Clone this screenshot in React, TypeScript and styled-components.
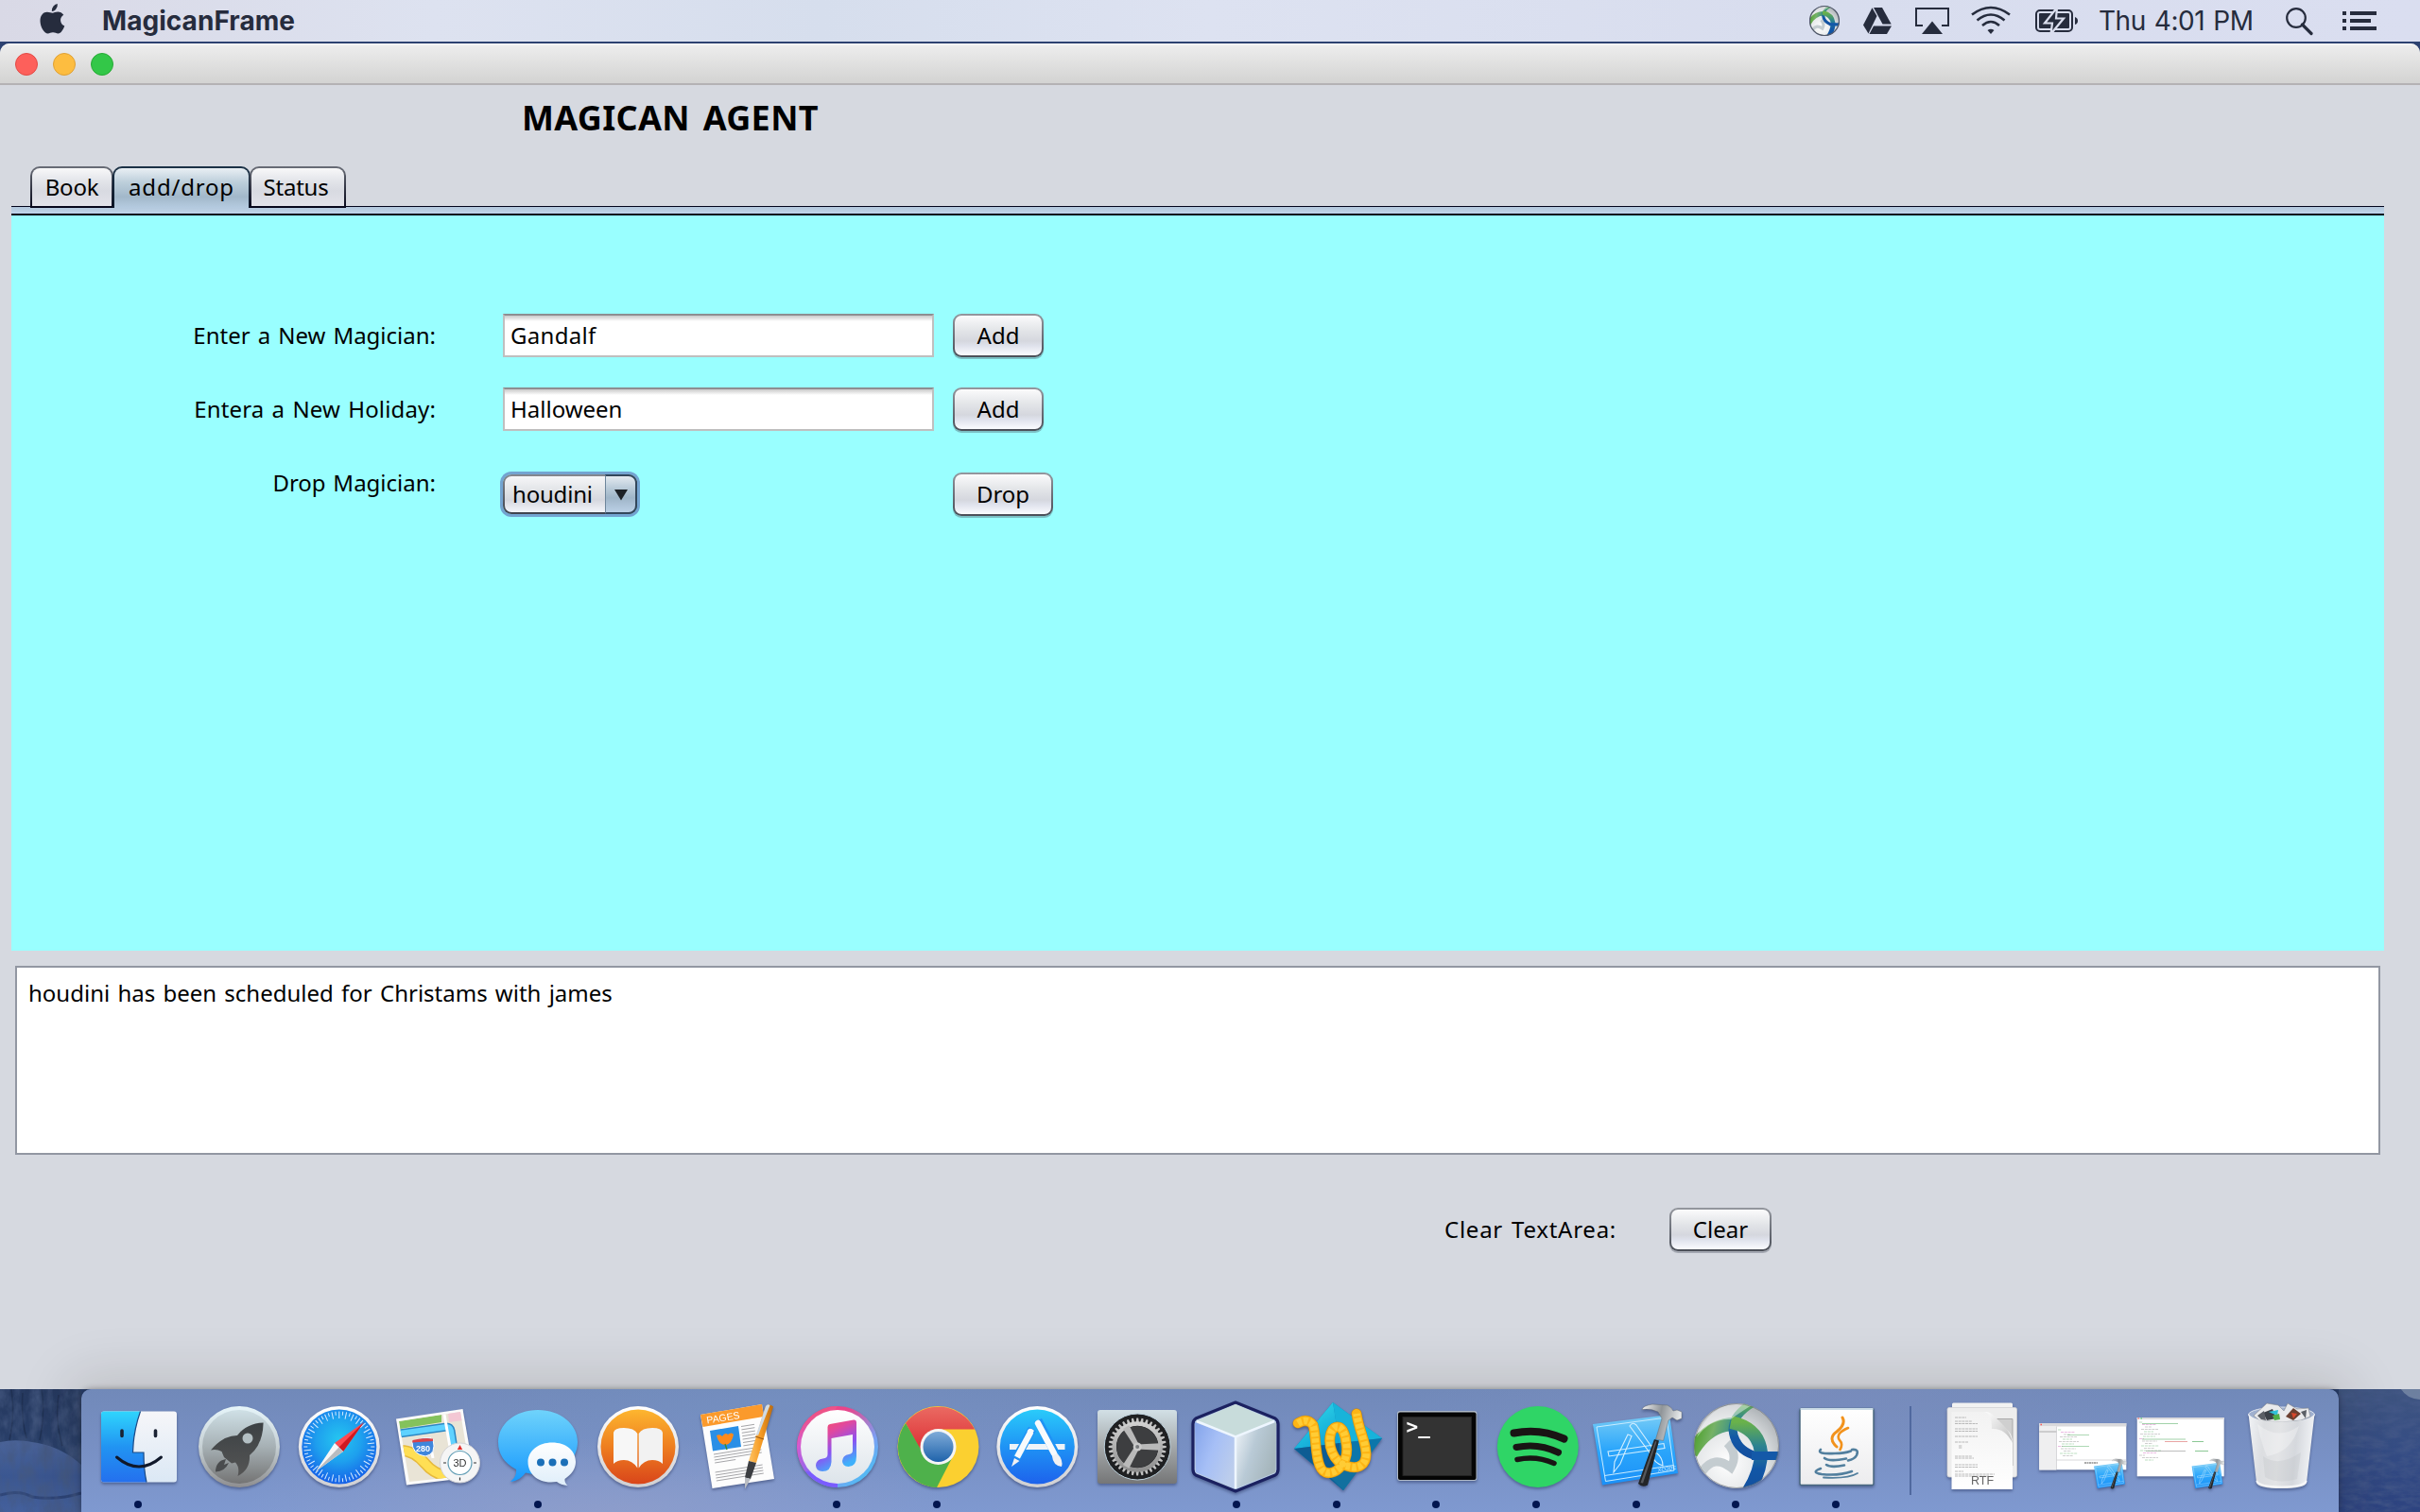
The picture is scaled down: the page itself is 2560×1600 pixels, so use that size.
import React from "react";
import styled, { createGlobalStyle } from "styled-components";

const GlobalStyle = createGlobalStyle`
  *, *::before, *::after { box-sizing: border-box; }
  html, body { margin: 0; padding: 0; background: #34497c; overflow: hidden; }
`;

const swingFont = `"Noto Sans", "Open Sans", sans-serif`;
const ink = "#262c3d";

const Screen = styled.div`
  width: 2560px;
  height: 1600px;
  display: flex;
  flex-direction: column;
  overflow: hidden;
  background: linear-gradient(180deg, #2c4170 0, #33497c 60%, #2a426f 93%, #41588f 100%);
  font-family: ${swingFont};
`;

/* ---------- menu bar ---------- */

const MenuBar = styled.header`
  flex: none;
  height: 44px;
  display: flex;
  align-items: center;
  justify-content: space-between;
  padding: 0 46px 0 42px;
  background: linear-gradient(90deg, #d9d9e6 0, #dde2f0 18%, #d6deed 34%, #dde2f1 50%, #d8ddee 75%, #dadef0 100%);
`;

const MenuLeft = styled.div`
  display: flex;
  align-items: center;
  gap: 39px;
`;

const MenuRight = styled.div`
  display: flex;
  align-items: center;
`;

const AppName = styled.span`
  font: 700 28px/45px Inter, sans-serif;
  letter-spacing: 0.05px;
  color: ${ink};
`;

const Clock = styled.span`
  width: 162px;
  margin: 0 36px 0 22px;
  font: 400 28px/45px Inter, sans-serif;
  letter-spacing: -0.5px;
  word-spacing: 1.8px;
  white-space: nowrap;
  color: ${ink};
`;

const MenuIcon = styled.svg<{ $w: number; $gap?: number }>`
  display: block;
  flex: none;
  width: ${(p) => p.$w}px;
  height: 44px;
  margin-right: ${(p) => p.$gap ?? 0}px;
`;

/* ---------- window ---------- */

const Frame = styled.main`
  flex: none;
  height: 1424px;
  margin-top: 2px;
  display: flex;
  flex-direction: column;
  border-radius: 10px 10px 0 0;
  background: #d6d9e0;
  overflow: hidden;
`;

const TitleBar = styled.div`
  flex: none;
  height: 44px;
  display: flex;
  align-items: center;
  gap: 16px;
  padding: 2px 0 0 16px;
  border-bottom: 2px solid #b4b2b4;
  background: linear-gradient(180deg, #f8f8f8 0, #ececec 3px, #d3d3d2 100%);
`;

const Light = styled.span<{ $fill: string; $edge: string }>`
  width: 24px;
  height: 24px;
  border-radius: 50%;
  border: 1px solid ${(p) => p.$edge};
  background: ${(p) => p.$fill};
`;

const Content = styled.div`
  display: flex;
  flex-direction: column;
  padding: 15px 38px 0 12px;
`;

const Heading = styled.h1`
  margin: 0 0 31px 540px;
  font: 700 36px/40px ${swingFont};
  letter-spacing: 0.35px;
  word-spacing: 4px;
  color: #000;
`;

const TabRow = styled.div`
  display: flex;
  height: 44px;
  padding-left: 20px;
  margin-bottom: -2px;
  position: relative;
`;

const Tab = styled.button<{ $active?: boolean; $w: number; $ls?: number; $dx?: number }>`
  width: ${(p) => p.$w}px;
  height: 44px;
  margin: 0 -1px 0 0;
  padding: 1px ${(p) => p.$dx ?? 0}px ${(p) => (p.$active ? 4 : 2)}px 0;
  border: 2px solid transparent;
  border-bottom-width: ${(p) => (p.$active ? 0 : 2)}px;
  border-radius: 10px 10px 0 0;
  background: ${(p) =>
    p.$active
      ? "linear-gradient(180deg, #e9eff4 0, #bdcfdb 35%, #a2b8ca 72%, #b5cbe0 100%) padding-box, linear-gradient(180deg, #1c3247, #0b1628) border-box"
      : "linear-gradient(180deg, #f8f8f9 0, #e2e4e9 35%, #d8dae1 60%, #e2e3ea 100%) padding-box, linear-gradient(180deg, #6a6e78 0, #2a2d3c 60%, #05061a 100%) border-box"};
  font: 400 24px/36px ${swingFont};
  letter-spacing: ${(p) => p.$ls ?? 0}px;
  color: #000;
  white-space: nowrap;
`;

const TabStrip = styled.div`
  height: 10px;
  border-top: 1px solid #02041c;
  border-bottom: 2px solid #02041c;
  background: linear-gradient(180deg, #b3c7dc, #c0d6ea);
`;

const Panel = styled.section`
  height: 778px;
  padding-top: 104px;
  background: #99ffff;
`;

const FormGrid = styled.div`
  display: grid;
  grid-template-columns: 449px 456px 110px;
  grid-auto-rows: 46px;
  column-gap: 71px;
  row-gap: 32px;
`;

const Label = styled.label<{ $ls?: number; $ws?: number }>`
  font: 400 24px/46px ${swingFont};
  letter-spacing: ${(p) => p.$ls ?? 0}px;
  word-spacing: ${(p) => p.$ws ?? 0}px;
  text-align: right;
  white-space: nowrap;
  color: #000;
`;

const TextField = styled.div`
  height: 46px;
  padding-left: 6px;
  border: 2px solid #bfbfbf;
  border-top-color: #8d8e91;
  background: linear-gradient(180deg, #c9c9c9 0, #fff 6px);
  font: 400 24px/42px ${swingFont};
  color: #000;
`;

const Fitted = styled.span<{ $ls?: number; $ws?: number }>`
  letter-spacing: ${(p) => p.$ls ?? 0}px;
  word-spacing: ${(p) => p.$ws ?? 0}px;
`;

const PushButton = styled.button<{ $w: number; $low?: boolean }>`
  width: ${(p) => p.$w}px;
  height: 46px;
  padding: 0;
  margin: ${(p) => (p.$low ? 12 : 0)}px 0 0;
  border: 2px solid transparent;
  border-radius: 9px;
  background:
    linear-gradient(180deg, #fbfbfc 0, #e4e6e9 35%, #d5d7de 64%, #dfe2ec 76%, #fbfcff 100%) padding-box,
    linear-gradient(180deg, #94979e 0, #6c7079 50%, #4b4f58 100%) border-box;
  box-shadow: 0 2px 0 rgba(70, 75, 90, 0.35);
  font: 400 24px/42px ${swingFont};
  color: #000;
`;

const ButtonCell = styled.div`
  margin-left: -51px;
  display: flex;
  align-items: flex-start;
`;

const Combo = styled.div`
  width: 142px;
  height: 42px;
  margin: 14px 0 0;
  display: flex;
  border: 2px solid transparent;
  border-radius: 9px;
  box-shadow: 0 0 0 3px #73a4d1;
  background:
    linear-gradient(180deg, #f6f6f8 0, #e4e6e9 35%, #d5d7de 66%, #f3f5fb 100%) padding-box,
    linear-gradient(180deg, #85888f 0, #3e434d 100%) border-box;
  font: 400 24px/38px ${swingFont};
  color: #000;
`;

const ComboValue = styled.span`
  width: 106px;
  padding-left: 8px;
  letter-spacing: -0.2px;
`;

const ComboArrow = styled.span`
  flex: 1;
  display: flex;
  align-items: center;
  justify-content: center;
  margin: -2px -2px -2px 0;
  border: 2px solid #33475b;
  border-left: 1px solid #6d859b;
  border-radius: 0 9px 9px 0;
  background: linear-gradient(180deg, #e3eaf0 0, #b7c9d7 35%, #9fb5c8 60%, #bbd0e6 100%);

  svg { display: block; margin-top: 1px; }
`;

const Output = styled.div`
  height: 200px;
  margin: 16px 4px 0;
  padding: 11px 12px;
  border: 2px solid #9297a2;
  background: #fff;
  font: 400 24px/32px ${swingFont};
  color: #000;
`;

const ClearRow = styled.div`
  display: flex;
  margin-top: 56px;
  padding-left: 1516px;
`;

const ClearLabel = styled.span`
  width: 238px;
  font: 400 24px/46px ${swingFont};
  color: #000;
`;

/* ---------- dock ---------- */

const DockArea = styled.footer`
  flex: none;
  display: flex;
  position: relative;
  height: 130px;
  background: #2b4170;
`;

const Wallpaper = styled.svg`
  display: block;
  flex: none;
  width: 86px;
  height: 130px;
`;

const Dock = styled.nav`
  flex: 1;
  position: relative;
  display: flex;
  height: 130px;
  padding-left: 8.2px;
  border-radius: 10px 10px 0 0;
  box-shadow: 0 0 56px 14px rgba(30, 25, 10, 0.13), 0 0 6px rgba(0, 0, 0, 0.35);
  background:
    radial-gradient(420px 90px at 31% 10%, rgba(120, 150, 200, 0.35), transparent),
    radial-gradient(380px 80px at 23% 100%, rgba(150, 160, 200, 0.6), transparent),
    radial-gradient(400px 90px at 76% 0, rgba(125, 142, 190, 0.6), transparent),
    linear-gradient(180deg, #7189b9 0, #7890c4 50%, #7f99d0 100%);
`;

const Slot = styled.div`
  flex: none;
  width: 105.65px;
  display: flex;
  flex-direction: column;
  align-items: center;
  padding-top: 11px;
`;

const DockIcon = styled.svg`
  display: block;
  width: 100px;
  height: 100px;
  overflow: visible;
  filter: drop-shadow(0 2px 1.5px rgba(20, 30, 70, 0.4));
`;

const Dot = styled.span`
  width: 8px;
  height: 8px;
  margin: 7px 2px 0 0;
  border-radius: 50%;
  background: #021650;
`;

const Divider = styled.span`
  flex: none;
  width: 2px;
  height: 94px;
  margin: 18px 22.4px 0 24px;
  background: #50699f;
`;

/* ---------- icon drawings (100 x 100 canvas) ---------- */

const Grad = ({ id, stops, x2 = 0, y2 = 1 }: { id: string; stops: string[]; x2?: number; y2?: number }) => (
  <linearGradient id={id} x1="0" y1="0" x2={x2} y2={y2}>
    {stops.map((c, i) => (
      <stop key={i} offset={i / (stops.length - 1)} stopColor={c} />
    ))}
  </linearGradient>
);

const Finder = () => (
  <>
    <defs>
      <Grad id="fnL" stops={["#2fd5fd", "#2194f2", "#2470ee"]} />
      <Grad id="fnR" stops={["#f6f6f9", "#dbe8f5"]} />
    </defs>
    <rect x="10" y="12.500" width="80" height="75" rx="3" fill="url(#fnR)" />
    <path d="M13 12.500H51.500Q44 34 43.500 56H55Q55 74 58 87.500H13Q10 87.500 10 84.500V15.500Q10 12.500 13 12.500Z" fill="url(#fnL)" />
    <path d="M51.500 12.500Q44 34 43.500 56H55Q55 74 58 87.500" fill="none" stroke="#1b4a86" strokeWidth="1.200" />
    <path d="M32 33v5.500M67.500 33v5.500" stroke="#1a2233" strokeWidth="3.600" strokeLinecap="round" />
    <path d="M26.500 61Q50 81 73.500 61" fill="none" stroke="#10182a" strokeWidth="3" strokeLinecap="round" />
  </>
);

const Launchpad = () => (
  <>
    <defs>
      <Grad id="lpO" stops={["#e6f5fa", "#c6d0d4", "#8e8e90"]} />
      <Grad id="lpI" stops={["#cfe0e6", "#a6b0b4", "#747474"]} />
      <Grad id="lpR" stops={["#3c4144", "#555"]} />
    </defs>
    <circle cx="50" cy="50" r="43" fill="url(#lpO)" />
    <circle cx="50" cy="50" r="39" fill="url(#lpI)" />
    <path d="M75.600 24.500Q58 25 48 38Q33 38 20 53.500Q26 52 31.500 55L34 61L42 67.500L46 66.500Q51 72 48.500 81Q62 74 61 59Q75 48 75.600 24.500Z" fill="url(#lpR)" />
    <path d="M36 63Q25 65 25 76.500Q35 76 39 67L34 69Z" fill="#4a4c4e" />
    <circle cx="59" cy="41" r="5.500" fill="#b3bfc3" />
  </>
);

const Safari = () => (
  <>
    <defs>
      <radialGradient id="sfB" cx=".5" cy=".4" r=".6">
        <stop offset="0" stopColor="#25c6f0" />
        <stop offset=".5" stopColor="#1ea0ee" />
        <stop offset="1" stopColor="#1560e8" />
      </radialGradient>
      <Grad id="sfO" stops={["#ffffff", "#cfcfd2"]} />
    </defs>
    <circle cx="50.800" cy="50" r="43" fill="url(#sfO)" />
    <circle cx="50.800" cy="50" r="39.500" fill="url(#sfB)" />
    {Array.from({ length: 60 }, (_, i) => (
      <path key={i} d={`M50.800 12.500V${i % 2 ? 16.5 : 20}`} stroke="#d8ecff" strokeWidth="1" transform={`rotate(${i * 6} 50.8 50)`} />
    ))}
    <path d="M77 24L46 46L55 55Z" fill="#ff4a50" />
    <path d="M77 24L50.500 50.500L55 55Z" fill="#d01920" />
    <path d="M26 76L46 46L55 55Z" fill="#f7f7f7" />
    <path d="M26 76L50.500 50.500L55 55Z" fill="#b9bcc0" />
  </>
);

const MapsIcon = () => (
  <>
    <clipPath id="mpC">
      <path d="M8 23L73 13L84 80L19 87Z" />
    </clipPath>
    <path d="M5 20.500L75.500 10L88 82L16 90.500Z" fill="#fbfbfa" />
    <g clipPath="url(#mpC)">
      <path d="M0 0H100V100H0Z" fill="#e9e4d6" />
      <path d="M8 23L53 16V24L9 31Z" fill="#84c25c" />
      <path d="M60 14L74 12L76 22L61 24Z" fill="#f3c7d4" />
      <path d="M8 36L58 29Q62 29 63 33L66 52" fill="none" stroke="#2d88c4" strokeWidth="9" />
      <path d="M8 36L58 29Q62 29 63 33L66 52" fill="none" stroke="#5fd2ff" strokeWidth="6" />
      <path d="M10 54Q24 54 36 68Q44 78 60 82" fill="none" stroke="#e6b93c" strokeWidth="12" />
      <path d="M10 54Q24 54 36 68Q44 78 60 82" fill="none" stroke="#ffdf54" strokeWidth="9" />
      <path d="M55 10L62 50M40 40L44 62" stroke="#fff" strokeWidth="3" />
    </g>
    <path d="M22 45Q34 38 44 42Q48 58 36 60Q22 58 22 45Z" fill="#3f86dc" stroke="#fff" strokeWidth="1" />
    <path d="M22 45.500L22.500 43Q34 40 44 41.500V44Z" fill="#d9434a" />
    <text x="33.500" y="54.500" fontSize="9" fontFamily="Liberation Sans, Arial, sans-serif" fontWeight="700" fill="#fff" textAnchor="middle">280</text>
    <circle cx="72.500" cy="67" r="21" fill="#f5f5f5" stroke="#d3d3d6" />
    <circle cx="72.500" cy="67" r="12.500" fill="#fff" stroke="#5f9cb4" strokeWidth="1.200" />
    <path d="M72.500 48L75.200 53H69.800Z" fill="#e22a2a" />
    <path d="M72.500 82.500v3M55 67h3M87 67h3" stroke="#333" strokeWidth="1.200" />
    <text x="72.500" y="71" fontSize="11" fontFamily="Liberation Sans, Arial, sans-serif" fill="#333" textAnchor="middle">3D</text>
  </>
);

const Messages = () => (
  <>
    <defs>
      <Grad id="msB" stops={["#6fd3fb", "#1899fd"]} />
      <Grad id="msW" stops={["#ffffff", "#dfeefa"]} />
    </defs>
    <path d="M49 11C73 11 91 26 91 45C91 65 73 79 49 79Q42 79 36 77.500Q30 86 20 87Q27 81 26 74Q7 64 7 45C7 26 25 11 49 11Z" fill="url(#msB)" />
    <path d="M64 45.500C79 45.500 89 54 89 66C89 73 85 79 77.500 84Q77 88 80.500 91Q73 90.500 69 87C50 90 38.500 79 38.500 66C38.500 54 50 45.500 64 45.500Z" fill="url(#msW)" />
    <circle cx="52" cy="66.500" r="4" fill="#1a6fb8" />
    <circle cx="64.500" cy="66.500" r="4" fill="#1a6fb8" />
    <circle cx="77" cy="66.500" r="4" fill="#1a6fb8" />
  </>
);

const Books = () => (
  <>
    <defs>
      <Grad id="ibB" stops={["#fdb62f", "#ee7e20", "#d9451a"]} />
      <Grad id="ibO" stops={["#fff", "#cfcfd2"]} />
    </defs>
    <circle cx="50" cy="50" r="43" fill="url(#ibO)" />
    <circle cx="50" cy="50" r="39.500" fill="url(#ibB)" />
    <path d="M24 35Q25 30 35 30Q46 30 49.300 36V72.500Q44 64 35 64Q28 64 24 68Z" fill="#f7f7f7" />
    <path d="M76 35Q75 30 65 30Q54 30 50.700 36V72.500Q56 64 65 64Q72 64 76 68Z" fill="#f2f2f2" />
  </>
);

const Pages = () => (
  <>
    <defs>
      <Grad id="pgP" x2={1} y2={0} stops={["#ffc466", "#f59a23", "#b96a10"]} />
    </defs>
    <path d="M10 16L75 5L88 84L22.500 94Z" fill="#fdfdfd" />
    <path d="M10 16L75 5L77 18L12.500 29Z" fill="#fb9a2c" />
    <text x="17" y="25.500" fontSize="10.500" fontFamily="Liberation Sans, Arial, sans-serif" fill="#fff" transform="rotate(-9 17 25.500)">PAGES</text>
    <path d="M20 33L50 28L53 50L23 54.500Z" fill="#2a8fe6" />
    <path d="M27 38Q31 36 33 39Q36 34 39 37Q43 34 45 37Q43 47 37 48Q29 48 27 38Z" fill="#ff8a1c" />
    <path d="M36 47L38 53" stroke="#3f8a3a" strokeWidth="1.500" />
    {Array.from({ length: 7 }, (_, i) => (
      <path key={i} d={`M${53 + i * 0.4} ${28.500 + i * 3.400}l14 -2.200`} stroke="#a5a5a8" strokeWidth="1" />
    ))}
    {[58, 61, 64, 67, 77, 80, 83, 86].map((y, i) => (
      <path key={y} d={`M${24 + i * 0.4} ${y}l${i === 3 ? 22 : 50} ${i === 3 ? -3.500 : -8}`} stroke="#a5a5a8" strokeWidth="1" />
    ))}
    <path d="M78.500 8Q82 3.500 87 7.500L69 67L61 65Z" fill="url(#pgP)" />
    <path d="M79 7Q81 4 83.500 6L71 38L69 37Z" fill="#cfdbe6" />
    <path d="M68 39L77 42" stroke="#9a5a10" strokeWidth="1.200" />
    <path d="M61 65L69 67L63 84L57 82.500Z" fill="#3b3d41" />
    <path d="M57 82.500L63 84L57 94.500Z" fill="#b9bcc2" />
  </>
);

const ITunes = () => (
  <>
    <defs>
      <Grad id="itR" x2={1} stops={["#ff3d78", "#e9468c", "#7d9ef2", "#2fd0f5"]} />
      <Grad id="itV" x2={0.2} stops={["#fb4e5c", "#d65bd0", "#7a6cfb"]} />
      <Grad id="itN" x2={0.4} stops={["#ff5157", "#e0499f", "#8b52f2", "#3fb0fb"]} />
      <Grad id="itF" stops={["#ffffff", "#dde4ea"]} />
    </defs>
    <circle cx="50" cy="50" r="43" fill="url(#itR)" />
    <path d="M50 7A43 43 0 0 0 30 88Q12 60 50 7Z" fill="url(#itV)" />
    <path d="M16 76A43 43 0 0 0 50 93L50 80Z" fill="#7a5cff" />
    <circle cx="50" cy="50" r="39" fill="url(#itF)" />
    <path d="M39.500 29Q39.500 26.500 42 26L67 21.500Q70 21 70 24V60Q70 71 61.500 71Q55 70.500 55 65Q55.500 59 62 58Q66 57.500 66 54V37L43.500 41V66Q43 76 34 76Q27 75.500 27 69.500Q27.500 63.500 34.500 62.500Q39.500 62 39.500 58Z" fill="url(#itN)" />
  </>
);

const Chrome = () => (
  <>
    <defs>
      <Grad id="crB" stops={["#7fabd8", "#1f63ab"]} />
      <Grad id="crR" stops={["#ea6a62", "#dc2a30"]} />
    </defs>
    <circle cx="50.500" cy="50" r="43" fill="#fbd030" />
    <path d="M16 25A43 43 0 0 1 89 31.500H50Q36 33 34 58Z" fill="url(#crR)" />
    <path d="M16 25A43 43 0 0 0 49 93L65 62Q50 76 35 58Z" fill="#4eb14b" />
    <circle cx="50.500" cy="50" r="19" fill="#f5f5f5" />
    <circle cx="50.500" cy="50" r="16" fill="url(#crB)" />
  </>
);

const AppStore = () => (
  <>
    <defs>
      <Grad id="asB" stops={["#2acbfa", "#1f93f5", "#1d62ec"]} />
      <Grad id="asO" stops={["#fff", "#cfcfd2"]} />
    </defs>
    <circle cx="49.300" cy="50" r="43" fill="url(#asO)" />
    <circle cx="49.300" cy="50" r="39.500" fill="url(#asB)" />
    <path d="M20 47H78.500V53H20Z" fill="#eef3f8" />
    <path d="M50 22L70 60" stroke="#1f93f5" strokeWidth="9" />
    <path d="M44 31L27 62" stroke="#1f93f5" strokeWidth="9" />
    <path d="M50 25L67 57" stroke="#f8fafc" strokeWidth="6.500" strokeLinecap="round" />
    <path d="M65 60L70.500 57Q77 64 75 71Q66 70 65 60Z" fill="#f1f1f3" />
    <path d="M42.500 34L28 61" stroke="#f8fafc" strokeWidth="6.500" strokeLinecap="butt" />
    <path d="M39.500 32Q42 29 46 33L44 36L38.500 34Z" fill="#f8fafc" />
    <path d="M25 62L30.500 65L22 71Z" fill="#f1f1f3" />
  </>
);

const Settings = () => (
  <>
    <defs>
      <Grad id="spB" stops={["#d2e0e6", "#a4a8aa", "#757677"]} />
      <Grad id="spG" stops={["#d0d0d0", "#8f8f8f"]} />
    </defs>
    <rect x="8" y="11" width="84" height="78" rx="3" fill="url(#spB)" />
    <circle cx="50.200" cy="50" r="35" fill="#1f2022" stroke="#bcd0dc" strokeWidth="1" />
    {Array.from({ length: 36 }, (_, i) => (
      <path key={i} d="M48.600 24L49.300 19.500H51.200L51.900 24Z" fill="#c2c2c2" transform={`rotate(${i * 10} 50.200 50)`} />
    ))}
    <circle cx="50.200" cy="50" r="24.500" fill="none" stroke="url(#spG)" strokeWidth="4.500" />
    <circle cx="50.200" cy="50" r="22" fill="#3d3e40" />
    {[90, 210, 330].map((a) => (
      <path key={a} d="M47.800 50L46.500 26H54L52.700 50Z" fill="#b9b9b9" transform={`rotate(${a} 50.200 50)`} />
    ))}
    <circle cx="50.200" cy="50" r="4.500" fill="#c9c9c9" />
    <circle cx="50.200" cy="50" r="2" fill="#77797c" />
  </>
);

const NetBeans = () => (
  <>
    <defs>
      <Grad id="nbL" x2={1} y2={0.6} stops={["#83a3ea", "#a6bff6", "#bccdec"]} />
      <Grad id="nbR" x2={1} y2={0.5} stops={["#f3f7fb", "#b9cad6", "#a5b5bb"]} />
    </defs>
    <path d="M48 3L90 20Q93 22 93 26V74Q93 78 90 80L48 97L6 80Q3 78 3 74V26Q3 22 6 20Z" fill="#b7cbe4" stroke="#1b2160" strokeWidth="3.200" strokeLinejoin="round" />
    <path d="M48 5L89 22.500L48 39L7 22.500Z" fill="#c8dcdb" />
    <path d="M5 24L48 40V94L6 77Z" fill="url(#nbL)" />
    <path d="M91 24L48 40V94L90.500 77Z" fill="url(#nbR)" />
    <path d="M7 23L48 39.500L89 23M48 40V94" fill="none" stroke="#eef6ff" strokeWidth="2.500" />
  </>
);

const ropePath = "M8 25Q18 19 24 27C28 38 25 72 37 77C48 81 63 66 59 46C57 25 46 26 43 35C39 48 45 66 59 70C73 75 81 68 80 56C79 42 73 34 70 15";

const Workbench = () => (
  <>
    <defs>
      <Grad id="wbA" x2={0.6} stops={["#35e0ec", "#10a5d6"]} />
    </defs>
    <path d="M45 3L97 41L56 96L4 52Z" fill="#1489bd" />
    <path d="M45 3L4 52L52 46Z" fill="url(#wbA)" />
    <path d="M45 3L97 41L52 46Z" fill="#17b3da" />
    <path d="M97 41L56 96L52 46Z" fill="#0c76aa" />
    <path d="M4 52L56 96L52 46Z" fill="#0d5c93" />
    <path d="M40 80L56 74L70 77L56 96Z" fill="#12709f" />
    <path d={ropePath} fill="none" stroke="#c98712" strokeWidth="11" strokeLinecap="round" />
    <path d={ropePath} fill="none" stroke="#fdb515" strokeWidth="10" strokeLinecap="round" />
    <path d={ropePath} fill="none" stroke="#ffcc35" strokeWidth="7.500" strokeDasharray="4.500 2" />
  </>
);

const Terminal = () => (
  <>
    <rect x="8" y="12" width="84.500" height="74" rx="3" fill="#aeb9c6" />
    <rect x="9" y="13.500" width="82.500" height="71.500" rx="2" fill="#050505" />
    <rect x="14" y="18.500" width="72.500" height="62" fill="#333" stroke="#222" />
    <text x="17.500" y="36" fontSize="21" fontFamily="DejaVu Sans Mono, monospace" fontWeight="700" fill="#fff">&gt;_</text>
  </>
);

const Spotify = () => (
  <>
    <circle cx="50.800" cy="50" r="43" fill="#2fd566" />
    <g fill="none" stroke="#191414" strokeLinecap="round">
      <path d="M25.500 35.500Q53 30 78.500 41.500" strokeWidth="8" />
      <path d="M28 50.500Q51 45.500 72.500 56" strokeWidth="7" />
      <path d="M29 63.500Q49 59 68 67.500" strokeWidth="5.500" />
    </g>
  </>
);

const XcodeArt = ({ id }: { id: string }) => (
  <>
    <defs>
      <Grad id={`${id}b`} stops={["#79cdf6", "#2ba6fb", "#1a90f8"]} />
      <Grad id={`${id}h`} x2={1} y2={0.2} stops={["#f4f4f4", "#8f9498", "#e9ebec"]} />
    </defs>
    <path d="M3 26L84 16L93 78L13 90.500Z" fill={`url(#${id}b)`} />
    <path d="M7 29L81 19L89 75L16.500 86.500Z" fill="none" stroke="#c9ecff" strokeWidth="1" />
    <path d="M15.500 80.500L88.500 69.500" stroke="#c9ecff" strokeWidth="1" />
    <g fill="none" stroke="#d3efff" strokeWidth="1.100">
      <path d="M19 55L78 46.500L79 51.500L20 60Z" />
      <path d="M40 37L44 38.500L32 68L25 77L26 66Z" />
      <path d="M42 28Q45 23 49 27L70 57L66 60Z" />
      <path d="M66 60Q68 67 77 70Q77 62 71 57" />
    </g>
    <path d="M69.500 42L76 20L72 13Q64 9 55 10.500Q56 6.500 66 5L82 6Q86 8 88 12L92 11L97 13V20L92 22L87 19L83 22L77.500 43.500Z" fill={`url(#${id}h)`} stroke="#666c72" strokeWidth=".5" />
    <path d="M68 42L73 43.500L61 90.500Q55 93.500 51 89Z" fill="#232527" />
    <path d="M69 44L70.500 44.500L56 88.500L53.500 88Z" fill="#55585c" />
  </>
);

const Xcode = () => (
  <>
    <XcodeArt id="xc" />
    <text x="72" y="76.500" fontSize="5.500" fontFamily="Liberation Sans, Arial, sans-serif" fill="#d3efff" transform="rotate(-8 72 76.500)">XCODE</text>
  </>
);

const GlobeArt = ({ id }: { id: string }) => (
  <>
    <defs>
      <radialGradient id={`${id}s`} cx=".4" cy=".7" r=".75">
        <stop offset="0" stopColor="#ffffff" />
        <stop offset=".6" stopColor="#dfe2e4" />
        <stop offset="1" stopColor="#a9aeb2" />
      </radialGradient>
      <Grad id={`${id}g`} x2={1} y2={0.2} stops={["#3f9a16", "#76b266", "#2f8b8f"]} />
      <Grad id={`${id}b`} stops={["#6ab24a", "#2c8390", "#1257a6", "#124f9f"]} />
      <clipPath id={`${id}c`}>
        <circle cx="50" cy="49" r="45" />
      </clipPath>
    </defs>
    <circle cx="50" cy="49" r="45" fill={`url(#${id}s)`} />
    <g clipPath={`url(#${id}c)`} fill="none">
      <path d="M14 76Q26 58 44 72Q52 58 40 46" stroke="#c4ccd0" strokeWidth="9" />
      <path d="M2 57Q20 25 50 26" stroke={`url(#${id}g)`} strokeWidth="14" />
      <path d="M68 3Q46 16 46 32Q48 52 68 59" stroke={`url(#${id}b)`} strokeWidth="9" />
      <path d="M44 24Q73 30 76 56Q76 76 62 98" stroke={`url(#${id}b)`} strokeWidth="14" />
      <path d="M66 59.500H98" stroke="#1459a8" strokeWidth="9" />
      <path d="M8 40Q20 6 52 4L66 6Q50 16 44 21Q22 20 8 40Z" fill="#fff" opacity=".45" />
    </g>
    <circle cx="50" cy="49" r="44.500" fill="none" stroke="#6c7276" strokeOpacity=".6" />
  </>
);

const Java = () => (
  <>
    <defs>
      <Grad id="jvP" stops={["#ffffff", "#ececee"]} />
    </defs>
    <rect x="11" y="9.500" width="78" height="81" rx="1.500" fill="url(#jvP)" stroke="#49687f" strokeWidth="1.500" />
    <path d="M11.500 10H88.500" stroke="#c9dbe6" strokeWidth="2" />
    <g fill="none" stroke="#f2921c" strokeLinecap="round">
      <path d="M56 19Q60 26 50 34Q40 41 50 50" strokeWidth="3" />
      <path d="M62 30Q48 36 53 43Q57 47 53.500 53" strokeWidth="2.600" />
    </g>
    <g fill="none" stroke="#527f9e" strokeLinecap="round" strokeWidth="2.600">
      <path d="M33 53Q28 58 48 57Q58 57 65 54.500" />
      <path d="M66 53Q74 52 71 59Q69 63 62 64.500" />
      <path d="M37 62Q42 66 60 62.500" />
      <path d="M39 69Q44 72.500 58 69.500" />
      <path d="M33 73Q22 77 34 79Q52 81 66 76" />
      <path d="M36 82.500Q62 84 72 78" strokeWidth="1.800" />
    </g>
  </>
);

const RtfStack = () => (
  <>
    <defs>
      <Grad id="rtF" stops={["#f2f2f2", "#ffffff"]} />
      <Grad id="rtC" x2={1} stops={["#ffffff", "#bdbdbd"]} />
    </defs>
    <rect x="18" y="3.500" width="64" height="14" rx="1.500" fill="#f2f2f2" />
    <rect x="13" y="8.500" width="73.500" height="73.500" rx="2" fill="#ededed" stroke="#d2d2d4" strokeWidth=".8" />
    <path d="M60 20.500H82V70H60Z" fill="#cfcfcf" stroke="#aaa" />
    <path d="M17.500 13H54Q58 13 62 17L78 34Q82 38 82 46V95H17.500Z" fill="url(#rtF)" />
    <path d="M52 13Q60 14 60 31Q74 30 82 46Q80 36 74 29L62 17Q58 13 52 13Z" fill="url(#rtC)" />
    {[19, 23, 25.500, 31, 33.500, 39, 45, 49, 51, 60, 62, 69, 71.500, 76, 79, 81].map((y, i) => (
      <path key={y} d={`M${i === 7 || i === 8 ? 25 : 21} ${y}h${[12, 18, 24, 24, 24, 24, 14, 4, 4, 18, 20, 24, 24, 9, 42, 36][i]}`} stroke="#a8a8a8" strokeWidth=".8" strokeDasharray="3 .7" />
    ))}
    <text x="50" y="90" fontSize="12.500" fontFamily="Liberation Sans, Arial, sans-serif" fill="#666" textAnchor="middle">RTF</text>
  </>
);

const codeTone = ["#3da34d", "#c63fb0", "#777", "#777", "#3da34d", "#777"];

const CodeLines = ({ x, y, n }: { x: number; y: number; n: number }) => (
  <>
    {Array.from({ length: n }, (_, i) => (
      <path key={i} d={`M${x + ((i * 3) % 7)} ${y + i * 2.500}h${4 + ((i * 11) % 19)}`} stroke={codeTone[i % 6]} strokeWidth=".6" strokeDasharray="3 .8" opacity=".6" />
    ))}
  </>
);

const WindowA = () => (
  <>
    <rect x="4.300" y="25" width="92" height="49.300" fill="#fff" />
    <path d="M4.300 25h92v3.500h-92Z" fill="#d9d9dc" />
    <path d="M4.300 28.500h18v46h-18Z" fill="#efeff0" />
    <path d="M22.500 28.500V74M22.500 64H96" stroke="#c9c9cc" strokeWidth=".7" />
    <path d="M4.300 34h18" stroke="#999" strokeWidth=".8" />
    <path d="M5.500 26.500h1.500" stroke="#f55" strokeWidth="1.400" />
    <path d="M52 67H66" stroke="#555" strokeWidth="1.200" strokeDasharray="2 .5" />
    <CodeLines x={24} y={32} n={12} />
    <path d="M34 37.500h23M28 49.500h29" stroke="#3da34d" strokeWidth=".6" opacity=".7" />
    <g transform="translate(61 61) scale(.365)"><XcodeArt id="xa" /></g>
  </>
);

const WindowB = () => (
  <>
    <rect x="2.700" y="19" width="92" height="62.300" fill="#fff" />
    <path d="M2.700 19h92v2h-92Z" fill="#dcdcde" />
    <path d="M3.500 20h1.500" stroke="#f55" strokeWidth="1.200" />
    <path d="M6.500 20h1.500" stroke="#3c5" strokeWidth="1.200" />
    <CodeLines x={5} y={24} n={17} />
    <path d="M8 25.500h38M8 42h46" stroke="#3da34d" strokeWidth=".6" opacity=".8" />
    <path d="M32 44.500h24" stroke="#d2433f" strokeWidth=".6" opacity=".8" />
    <path d="M61 44.500h12M64 54.500h14" stroke="#3da34d" strokeWidth=".6" />
    <path d="M12 54.500h42" stroke="#777" strokeWidth=".6" opacity=".8" />
    <g transform="translate(59.500 61) scale(.365)"><XcodeArt id="xb" /></g>
  </>
);

const Trash = () => (
  <>
    <defs>
      <Grad id="trB" x2={1} y2={0.1} stops={["#f1f3f6", "#dcdee1", "#e3e4e6", "#d5d8dd", "#f0f2f5"]} />
    </defs>
    <ellipse cx="49.500" cy="16" rx="35" ry="8" fill="#9fb0cf" stroke="#dfe5f0" />
    <path d="M20 17L34 4L46 6L52 12L56 4L66 10L78 9L80 18L70 22L50 24L26 22Z" fill="#e9eaec" stroke="#85888e" strokeWidth=".6" />
    <path d="M30 14L40 10L44 20L34 22Z" fill="#3c4148" />
    <path d="M36 13L46 11L45 17Z" fill="#2fc0d8" />
    <path d="M40 17L47 15L48 21L42 22Z" fill="#4fae4a" />
    <path d="M54 18L62 9L70 15L62 22Z" fill="#6c4030" />
    <path d="M60 14L66 15L62 20Z" fill="#d9482c" />
    <path d="M24 17L31 12L33 22L28 21ZM70 13L76 11L75 20Z" fill="#5b5f66" />
    <path d="M14.500 15Q20 23.500 49.500 23.500Q79 23.500 84.500 15L76 88Q74 94 49.500 94Q25 94 23 88Z" fill="url(#trB)" />
    <path d="M24 26Q46 44 68 28Q60 56 34 60Q28 46 24 26Z" fill="#fff" opacity=".3" />
    <path d="M30 60Q46 72 70 56L66 84Q46 90 32 82Z" fill="#b9bcc0" opacity=".25" />
    <path d="M23 86Q26 92.500 49.500 92.500Q73 92.500 76 86" fill="none" stroke="#fff" strokeWidth="2" opacity=".7" />
  </>
);

/* Snowy hillside left of the dock, rough water right of it. */

const Hillside = () => (
  <Wallpaper viewBox="0 0 86 130">
    <defs>
      <Grad id="hlS" stops={["#26395f", "#2c4675"]} />
      <Grad id="hlG" stops={["#4a6398", "#3b5791", "#44609c"]} />
      <filter id="hlN" x="0" y="0" width="100%" height="100%">
        <feTurbulence type="fractalNoise" baseFrequency=".09 .05" numOctaves="4" seed="4" />
        <feColorMatrix values="0 0 0 0 .06  0 0 0 0 .1  0 0 0 0 .22  1.6 0 0 0 -.55" />
      </filter>
    </defs>
    <rect width="86" height="130" fill="url(#hlS)" />
    <path d="M0 56Q18 52 40 57Q66 62 86 80V130H0Z" fill="url(#hlG)" />
    <path d="M12 0Q16 26 10 54M24 4Q22 30 28 52M44 0Q48 24 42 54M62 6Q58 34 66 60" fill="none" stroke="#1c2c4c" strokeWidth="1.500" opacity=".7" />
    <path d="M0 112Q20 106 34 114Q60 118 86 110" fill="none" stroke="#24396a" strokeWidth="3" opacity=".7" />
    <rect width="86" height="130" filter="url(#hlN)" />
  </Wallpaper>
);

const Water = () => (
  <Wallpaper viewBox="0 0 86 130">
    <defs>
      <Grad id="wtS" stops={["#3f5580", "#344c84", "#2d4380"]} />
      <filter id="wtN" x="0" y="0" width="100%" height="100%">
        <feTurbulence type="fractalNoise" baseFrequency=".06 .16" numOctaves="4" seed="9" />
        <feColorMatrix values="0 0 0 0 .06  0 0 0 0 .1  0 0 0 0 .25  1.6 0 0 0 -.55" />
      </filter>
    </defs>
    <rect width="86" height="130" fill="url(#wtS)" />
    <rect width="86" height="130" filter="url(#wtN)" />
    <path d="M66 0Q72 10 86 11V0Z" fill="#8193ad" opacity=".7" />
  </Wallpaper>
);

const apps: { name: string; art: React.ReactNode; running?: boolean }[] = [
  { name: "finder", art: <Finder />, running: true },
  { name: "launchpad", art: <Launchpad /> },
  { name: "safari", art: <Safari /> },
  { name: "maps", art: <MapsIcon /> },
  { name: "messages", art: <Messages />, running: true },
  { name: "books", art: <Books /> },
  { name: "pages", art: <Pages /> },
  { name: "itunes", art: <ITunes />, running: true },
  { name: "chrome", art: <Chrome />, running: true },
  { name: "appstore", art: <AppStore /> },
  { name: "settings", art: <Settings /> },
  { name: "netbeans", art: <NetBeans />, running: true },
  { name: "workbench", art: <Workbench />, running: true },
  { name: "terminal", art: <Terminal />, running: true },
  { name: "spotify", art: <Spotify />, running: true },
  { name: "xcode", art: <Xcode />, running: true },
  { name: "globe", art: <GlobeArt id="gd" />, running: true },
  { name: "java", art: <Java />, running: true },
];

const stacks: { name: string; art: React.ReactNode }[] = [
  { name: "rtf", art: <RtfStack /> },
  { name: "window-a", art: <WindowA /> },
  { name: "window-b", art: <WindowB /> },
  { name: "trash", art: <Trash /> },
];

const StatusIcons = () => (
  <>
    <MenuIcon $w={32} $gap={25} viewBox="0 0 32 44">
      <g transform="translate(-1.500 5) scale(.35)"><GlobeArt id="gm" /></g>
      <circle cx="16" cy="22" r="15.500" fill="none" stroke="#50586a" strokeWidth="1.200" />
    </MenuIcon>
    <MenuIcon $w={30} $gap={25} viewBox="0 0 30 44" fill={ink}>
      <path d="M9.500 8.300L14.500 17L5.500 35.500L0 26.500Z" />
      <path d="M11 8H20L29.700 25.500H20.500Z" />
      <path d="M11 27.500H30L25 36H6.500Z" />
    </MenuIcon>
    <MenuIcon $w={36} $gap={23} viewBox="0 0 36 44">
      <path d="M8 27H1V9H35V27H28" fill="none" stroke={ink} strokeWidth="2" />
      <path d="M18 22.500L29 36H7Z" fill={ink} />
    </MenuIcon>
    <MenuIcon $w={42} $gap={26} viewBox="0 0 42 44">
      <g fill="none" stroke={ink} strokeWidth="2.600">
        <path d="M1 15.500Q21 0.500 41 15.500" />
        <path d="M6.500 21.500Q21 9.500 35.500 21.500" />
        <path d="M12 27Q21 19 30 27" />
      </g>
      <path d="M17.500 32Q21 29.500 24.500 32L21 36Z" fill={ink} />
    </MenuIcon>
    <MenuIcon $w={45} viewBox="0 0 45 44">
      <rect x="1" y="11" width="38" height="22" rx="4" fill="none" stroke={ink} strokeWidth="2" />
      <rect x="4" y="14" width="32" height="16" rx="1" fill={ink} />
      <path d="M42 18Q45 19 45 22Q45 25 42 26Z" fill={ink} />
      <path d="M23 8L10 24.500H18L16.500 36L30 19.500H22Z" fill={ink} stroke="#dadeee" strokeWidth="2.200" />
    </MenuIcon>
  </>
);

export default function App() {
  return (
    <Screen>
      <GlobalStyle />
      <MenuBar>
        <MenuLeft>
          <MenuIcon $w={27} viewBox="0 0 27 44" fill={ink}>
            <path d="M18.800 4Q19.200 7.500 17 10Q15 12.200 12.800 12Q12.500 9 14.500 6.500Q16.500 4.300 18.800 4Z" />
            <path d="M13.500 13.700C15 13.700 16.500 12.500 19.300 12.500C21.500 12.500 24 13.700 25.300 15.800C20.500 18.500 21.200 25.500 26.300 27.500C25 31 22.500 35.500 19.500 35.500C17.500 35.500 16.500 34.300 14 34.300C11.500 34.300 10.500 35.500 8.800 35.500C4.500 35.500 .5 28 .5 22C.5 16 4 12.700 7.800 12.700C10.300 12.700 12 13.700 13.500 13.700Z" />
          </MenuIcon>
          <AppName>MagicanFrame</AppName>
        </MenuLeft>
        <MenuRight>
          <StatusIcons />
          <Clock>Thu 4:01 PM</Clock>
          <MenuIcon $w={29} $gap={31} viewBox="0 0 29 44">
            <circle cx="11" cy="19" r="9.800" fill="none" stroke={ink} strokeWidth="2.200" />
            <path d="M17.500 26L27 35.500" stroke={ink} strokeWidth="3.200" strokeLinecap="round" />
          </MenuIcon>
          <MenuIcon $w={36} viewBox="0 0 36 44" fill={ink}>
            <path d="M0 12h4v4H0ZM0 20h4v4H0ZM0 28h4v4H0ZM8 12h28v4H8ZM8 20h22v4H8ZM8 28h28v4H8Z" />
          </MenuIcon>
        </MenuRight>
      </MenuBar>

      <Frame>
        <TitleBar>
          <Light $fill="#fd605b" $edge="#e24a45" />
          <Light $fill="#fdbd40" $edge="#dea034" />
          <Light $fill="#33c748" $edge="#27aa35" />
        </TitleBar>
        <Content>
          <Heading>MAGICAN AGENT</Heading>
          <TabRow role="tablist">
            <Tab $w={88} $ls={-0.2}>Book</Tab>
            <Tab $w={146} $active $ls={0.8}>add/drop</Tab>
            <Tab $w={102} $ls={-0.2} $dx={4}>Status</Tab>
          </TabRow>
          <TabStrip />
          <Panel>
            <FormGrid>
              <Label $ws={1.8}>Enter a New Magician:</Label>
              <TextField><Fitted $ls={0.3}>Gandalf</Fitted></TextField>
              <ButtonCell><PushButton $w={96}>Add</PushButton></ButtonCell>

              <Label $ws={1.8} $ls={0.15}>Entera a New Holiday:</Label>
              <TextField><Fitted>Halloween</Fitted></TextField>
              <ButtonCell><PushButton $w={96}>Add</PushButton></ButtonCell>

              <Label $ws={1.5}>Drop Magician:</Label>
              <Combo>
                <ComboValue>houdini</ComboValue>
                <ComboArrow>
                  <svg width="14" height="12" viewBox="0 0 14 12"><path d="M0 0H14L7 11.500Z" fill="#1d2126" /></svg>
                </ComboArrow>
              </Combo>
              <ButtonCell><PushButton $w={106} $low>Drop</PushButton></ButtonCell>
            </FormGrid>
          </Panel>
          <Output><Fitted $ws={2}>houdini has been scheduled for Christams with james</Fitted></Output>
          <ClearRow>
            <ClearLabel><Fitted $ls={0.75} $ws={2}>Clear TextArea:</Fitted></ClearLabel>
            <PushButton $w={108}>Clear</PushButton>
          </ClearRow>
        </Content>
      </Frame>

      <DockArea>
        <Hillside />
        <Dock>
          {apps.map((a) => (
            <Slot key={a.name}>
              <DockIcon viewBox="0 0 100 100">{a.art}</DockIcon>
              {a.running && <Dot />}
            </Slot>
          ))}
          <Divider />
          {stacks.map((a) => (
            <Slot key={a.name}>
              <DockIcon viewBox="0 0 100 100">{a.art}</DockIcon>
            </Slot>
          ))}
        </Dock>
        <Water />
      </DockArea>
    </Screen>
  );
}
